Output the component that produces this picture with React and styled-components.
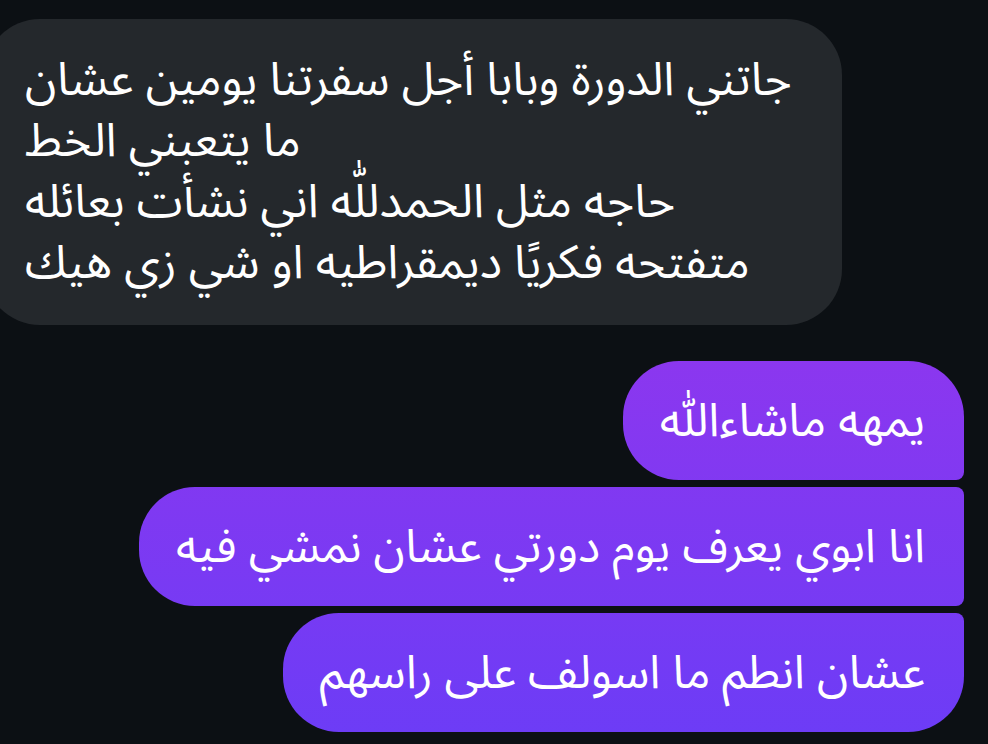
import React from 'react';
import styled, {createGlobalStyle} from 'styled-components';

const GlobalStyle = createGlobalStyle`
  html, body {
    margin: 0;
    padding: 0;
    background: #0c1014;
    overflow: hidden;
  }
  body {
    font-family: "Noto Sans Arabic", "Noto Sans", "DejaVu Sans", sans-serif;
    color: #ffffff;
  }
`;

const incoming = [
    "جاتني الدورة وبابا أجل سفرتنا يومين عشان",
    "ما يتعبني الخط",
    "حاجه مثل الحمدللّٰه اني نشأت بعائله",
    "متفتحه فكريًا ديمقراطيه او شي زي هيك",
];

const outgoing = [
    "يمهه ماشاءاللّٰه",
    "انا ابوي يعرف يوم دورتي عشان نمشي فيه",
    "عشان انطم ما اسولف على راسهم",
];

function Message({first, last, children}) {
    return (
        <OutBubble $first={first} $last={last}>
            <span dir="rtl">{children}</span>
        </OutBubble>
    );
}

export default function App() {
    return (
        <>
            <GlobalStyle/>
            <Thread>
                <InBubble>
                    {incoming.map((line, i) => (
                        <Line key={i} dir="rtl">{line}</Line>
                    ))}
                </InBubble>
                <OutGroup>
                    {outgoing.map((text, i) => (
                        <Message key={i} first={i === 0} last={i === outgoing.length - 1}>
                            {text}
                        </Message>
                    ))}
                </OutGroup>
            </Thread>
        </>
    );
}

const Thread = styled.div`
  width: 988px;
  height: 744px;
  box-sizing: border-box;
  padding: 19px 24px 0 0;
  display: flex;
  flex-direction: column;
`;

const InBubble = styled.div`
  align-self: flex-start;
  margin-left: -16px;
  width: 858px;
  height: 306px;
  box-sizing: border-box;
  padding: 31px 40px 31px 41px;
  border-radius: 56px;
  background: #24282c;
  font-size: 46.6px;
  display: flex;
  flex-direction: column;
  align-items: flex-start;
`;

const Line = styled.div`
  height: 61px;
  line-height: 61px;
  white-space: nowrap;
`;

const OutGroup = styled.div`
  margin-top: 36px;
  display: flex;
  flex-direction: column;
  align-items: flex-end;
  gap: 7px;
`;

const OutBubble = styled.div`
  height: 119px;
  box-sizing: border-box;
  padding: 0 39px 0 37px;
  display: flex;
  align-items: center;
  font-size: 46.4px;
  white-space: nowrap;
  border-top-left-radius: 56px;
  border-top-right-radius: ${p => p.$first ? '56px' : '8px'};
  border-bottom-right-radius: ${p => p.$last ? '56px' : '8px'};
  border-bottom-left-radius: 56px;
  background: linear-gradient(180deg, #8b37ef 361px, #6d3cf6 732px) fixed;
`;
